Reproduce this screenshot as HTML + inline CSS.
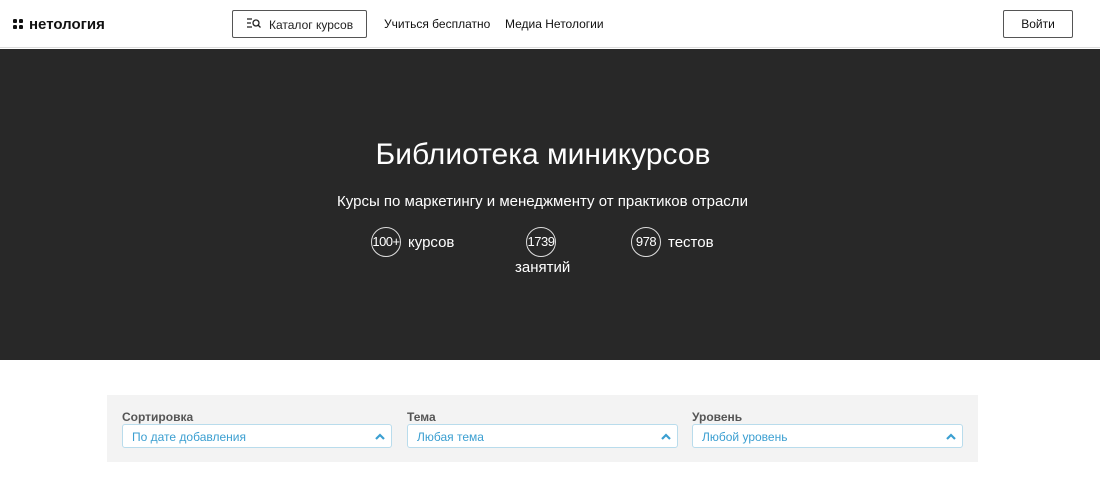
<!DOCTYPE html>
<html><head><meta charset="utf-8"><style>
*{margin:0;padding:0;box-sizing:border-box}
body{width:1100px;height:486px;overflow:hidden;background:#fff;font-family:"Liberation Sans",sans-serif;position:relative}
.a{position:absolute}
.hdr{top:0;left:0;width:1100px;height:48px;border-bottom:1px solid #ddd;background:#fff}
.hero{top:49px;left:0;width:1100px;height:311px;background:#282828;color:#fff}
.circ{position:absolute;width:30px;height:30px;border:1px solid #ddd;border-radius:50%;font-size:13px;text-align:center;line-height:28px;letter-spacing:-0.5px}
.lbl{font-size:15px}
.fl{background:#f3f3f3;top:395px;left:107px;width:871px;height:67px}
.sel{position:absolute;top:29px;height:24px;border:1px solid #b9dcec;border-radius:3px;background:#fff;font-size:12px;color:#3b9fd1;padding:5px 9px 0}
.cap{position:absolute;top:15px;font-size:12px;color:#555;font-weight:bold}
.chev{position:absolute;right:6px;top:8px}
</style></head><body>
<div class="a hdr">
 <svg class="a" style="left:13px;top:19px" width="10" height="10" viewBox="0 0 10 10"><rect x="0" y="0" width="4" height="4" rx="1.3" fill="#111"/><rect x="6" y="0" width="4" height="4" rx="1.3" fill="#111"/><rect x="0" y="6" width="4" height="4" rx="1.3" fill="#111"/><rect x="6" y="6" width="4" height="4" rx="1.3" fill="#111"/></svg>
 <div class="a" style="left:29px;top:16px;font-size:15px;font-weight:bold;color:#111">нетология</div>
 <div class="a" style="left:232px;top:10px;width:135px;height:28px;border:1px solid #555;border-radius:2px;font-size:12px;color:#222;padding:7px 0 0 36px">Каталог курсов</div>
 <svg class="a" style="left:247px;top:18px" width="14" height="11" viewBox="0 0 14 11"><path d="M0 1h5M0 5h4M0 9h5" stroke="#222" stroke-width="1.3"/><circle cx="9" cy="5" r="3" stroke="#222" stroke-width="1.3" fill="none"/><path d="M11 7l2.5 2.5" stroke="#222" stroke-width="1.3"/></svg>
 <div class="a" style="left:384px;top:17px;font-size:12px;color:#111">Учиться бесплатно</div>
 <div class="a" style="left:505px;top:17px;font-size:12px;color:#111">Медиа Нетологии</div>
 <div class="a" style="left:1003px;top:10px;width:70px;height:28px;border:1px solid #555;border-radius:2px;font-size:12px;color:#111;text-align:center;line-height:26px">Войти</div>
</div>
<div class="a hero">
 <div class="a" style="left:0;width:1086px;top:89px;text-align:center;font-size:30px">Библиотека миникурсов</div>
 <div class="a" style="left:0;width:1085px;top:144px;text-align:center;font-size:15px">Курсы по маркетингу и менеджменту от практиков отрасли</div>
 <div class="circ" style="left:371px;top:178px">100+</div><div class="a lbl" style="left:408px;top:185px">курсов</div>
 <div class="circ" style="left:526px;top:178px">1739</div><div class="a lbl" style="left:515px;top:210px">занятий</div>
 <div class="circ" style="left:631px;top:178px">978</div><div class="a lbl" style="left:668px;top:185px">тестов</div>
</div>
<div class="a fl">
 <div class="cap" style="left:15px">Сортировка</div>
 <div class="sel" style="left:15px;width:270px">По дате добавления<svg class="chev" width="10" height="7" viewBox="0 0 10 7"><path d="M1 6l4-4 4 4" stroke="#3b9fd1" stroke-width="2.2" fill="none"/></svg></div>
 <div class="cap" style="left:300px">Тема</div>
 <div class="sel" style="left:300px;width:271px">Любая тема<svg class="chev" width="10" height="7" viewBox="0 0 10 7"><path d="M1 6l4-4 4 4" stroke="#3b9fd1" stroke-width="2.2" fill="none"/></svg></div>
 <div class="cap" style="left:585px">Уровень</div>
 <div class="sel" style="left:585px;width:271px">Любой уровень<svg class="chev" width="10" height="7" viewBox="0 0 10 7"><path d="M1 6l4-4 4 4" stroke="#3b9fd1" stroke-width="2.2" fill="none"/></svg></div>
</div>
</body></html>
